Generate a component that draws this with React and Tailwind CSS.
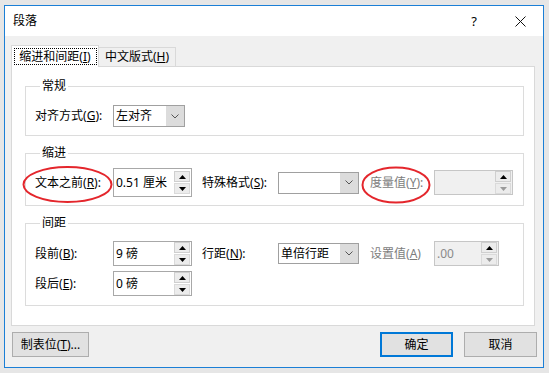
const font = "font-['Segoe_UI','Noto_Sans','Noto_Sans_CJK_SC',sans-serif]";

function Acc({ text, k, colon = true, disabled = false, className = "" }) {
  return (
    <span className={`whitespace-nowrap text-[12px] leading-[16px] ${disabled ? "text-[#7d7d7d]" : "text-black"} ${className}`}>
      {text}(<span className="underline underline-offset-[1px]">{k}</span>){colon ? ":" : ""}
    </span>
  );
}

function Arrow({ up, color = "#000" }) {
  return (
    <svg width="7" height="4" viewBox="0 0 7 4">
      {up ? <path d="M0 4 L3.5 0 L7 4 Z" fill={color} /> : <path d="M0 0 L7 0 L3.5 4 Z" fill={color} />}
    </svg>
  );
}

function Spin({ value, w = "w-[79px]", h = "h-[25px]", disabled = false }) {
  return (
    <div
      className={`flex ${w} ${h} items-center border ${
        disabled ? "border-[#c6c6c6] bg-[#f0f0f0]" : "border-[#a8a8a8] bg-white"
      }`}
    >
      <span className={`flex-1 pl-[2px] text-[12px] leading-[16px] ${disabled ? "text-[#8a8a8a]" : "text-black"}`}>
        {value}
      </span>
      <div className="mr-[1px] flex h-[23px] w-[16px] flex-col gap-[1px]">
        <div className="flex flex-1 items-center justify-center border border-[#cfcfcf] bg-[#ececec]">
          <Arrow up />
        </div>
        <div className="flex flex-1 items-center justify-center border border-[#dadada] bg-[#ececec]">
          <Arrow color={disabled ? "#9a9a9a" : "#000"} />
        </div>
      </div>
    </div>
  );
}

function Select({ value, w = "w-[81px]", h = "h-[22px]" }) {
  return (
    <div className={`flex ${w} ${h} border border-[#a0a0a0] bg-white`}>
      <span className="flex flex-1 items-center pl-[2px] text-[12px] leading-[16px] text-black">{value}</span>
      <div className="flex w-[18px] items-center justify-center bg-[#dcdcdc]">
        <svg width="8" height="5" viewBox="0 0 8 5">
          <path d="M0.5 0.5 L4 4 L7.5 0.5" fill="none" stroke="#555" strokeWidth="1" />
        </svg>
      </div>
    </div>
  );
}

function Group({ title, className = "", children }) {
  return (
    <fieldset className={`border border-[#dcdcdc] pl-[9px] ${className}`}>
      <legend className="ml-[5px] px-[2px] text-[12px] leading-[16px] text-black">{title}</legend>
      {children}
    </fieldset>
  );
}

export default function App() {
  return (
    <div className={`relative h-[373px] w-[549px] overflow-hidden bg-[#e6e6e6] pl-[4px] pt-[5px] ${font}`}>
      <div className="flex h-[363px] w-[540px] flex-col border border-[#1b7fd6] bg-[#f0f0f0]">
        <div className="flex h-[30px] items-center bg-white">
          <span className="flex-1 pl-[8px] text-[12px] leading-[16px] text-black">段落</span>
          <span className="flex w-[46px] justify-center text-[13px] leading-[16px] text-black">?</span>
          <span className="flex w-[46px] justify-center">
            <svg width="11" height="11" viewBox="0 0 11 11">
              <path d="M0.5 0.5 L10.5 10.5 M10.5 0.5 L0.5 10.5" stroke="#111" strokeWidth="1" />
            </svg>
          </span>
        </div>

        <div className="flex flex-col px-[6px] pt-[9px]">
          <div className="flex h-[21px] items-end">
            <div className="relative z-10 -mb-px flex h-[22px] w-[88px] items-start justify-center border border-b-0 border-[#d9d9d9] bg-white pt-[2px]">
              <span className="flex h-[17px] w-[83px] items-center justify-center border border-dotted border-black">
                <Acc text="缩进和间距" k="I" colon={false} />
              </span>
            </div>
            <div className="flex h-[19px] w-[77px] items-center justify-center border border-b-0 border-l-0 border-[#d9d9d9] bg-[#f0f0f0]">
              <Acc text="中文版式" k="H" colon={false} />
            </div>
          </div>

          <div className="flex h-[260px] w-[524px] flex-col border border-[#d9d9d9] bg-white pl-[13px] pr-[10px] pt-[11px]">
            <Group title="常规" className="pb-[8px] pt-[11px]">
              <div className="flex items-center">
                <Acc text="对齐方式" k="G" className="w-[78px]" />
                <Select value="左对齐" w="w-[72px]" />
              </div>
            </Group>

            <Group title="缩进" className="mt-[9px] pb-[8px] pt-[7px]">
              <div className="flex items-center">
                <Acc text="文本之前" k="R" className="w-[78px]" />
                <Spin value="0.51 厘米" h="h-[29px]" />
                <Acc text="特殊格式" k="S" className="ml-[10px] w-[76px]" />
                <Select value="" />
                <Acc text="度量值" k="Y" disabled className="ml-[11px] w-[64px]" />
                <Spin value="" disabled />
              </div>
            </Group>

            <Group title="间距" className="mt-[9px] pb-[9px] pt-[10px]">
              <div className="flex flex-col gap-[5px]">
                <div className="flex items-center">
                  <Acc text="段前" k="B" className="w-[78px]" />
                  <Spin value="9 磅" />
                  <Acc text="行距" k="N" className="ml-[10px] w-[76px]" />
                  <Select value="单倍行距" h="h-[21px]" />
                  <Acc text="设置值" k="A" colon={false} disabled className="ml-[11px] w-[64px]" />
                  <Spin value=".00" w="w-[65px]" disabled />
                </div>
                <div className="flex items-center">
                  <Acc text="段后" k="E" className="w-[78px]" />
                  <Spin value="0 磅" />
                </div>
              </div>
            </Group>
          </div>

          <div className="mt-[6px] flex items-center">
            <button className="ml-[1px] flex h-[25px] w-[77px] items-center justify-center border border-[#adadad] bg-[#e1e1e1]">
              <span className="whitespace-nowrap text-[12px] leading-[16px] text-black">
                制表位(<span className="underline underline-offset-[1px]">T</span>)...
              </span>
            </button>
            <div className="flex-1" />
            <button className="flex h-[25px] w-[73px] items-center justify-center border-2 border-[#0078d7] bg-[#e1e1e1] text-[12px] leading-[16px] text-black">
              确定
            </button>
            <button className="ml-[11px] flex h-[25px] w-[73px] items-center justify-center border border-[#adadad] bg-[#e1e1e1] text-[12px] leading-[16px] text-black">
              取消
            </button>
          </div>
        </div>
      </div>

      <svg className="pointer-events-none absolute left-0 top-0" width="549" height="373">
        <ellipse cx="67.5" cy="184.5" rx="44" ry="17.5" fill="none" stroke="#e4262c" strokeWidth="2" />
        <ellipse cx="396" cy="185" rx="33.5" ry="17.5" fill="none" stroke="#e4262c" strokeWidth="2" />
      </svg>
    </div>
  );
}
